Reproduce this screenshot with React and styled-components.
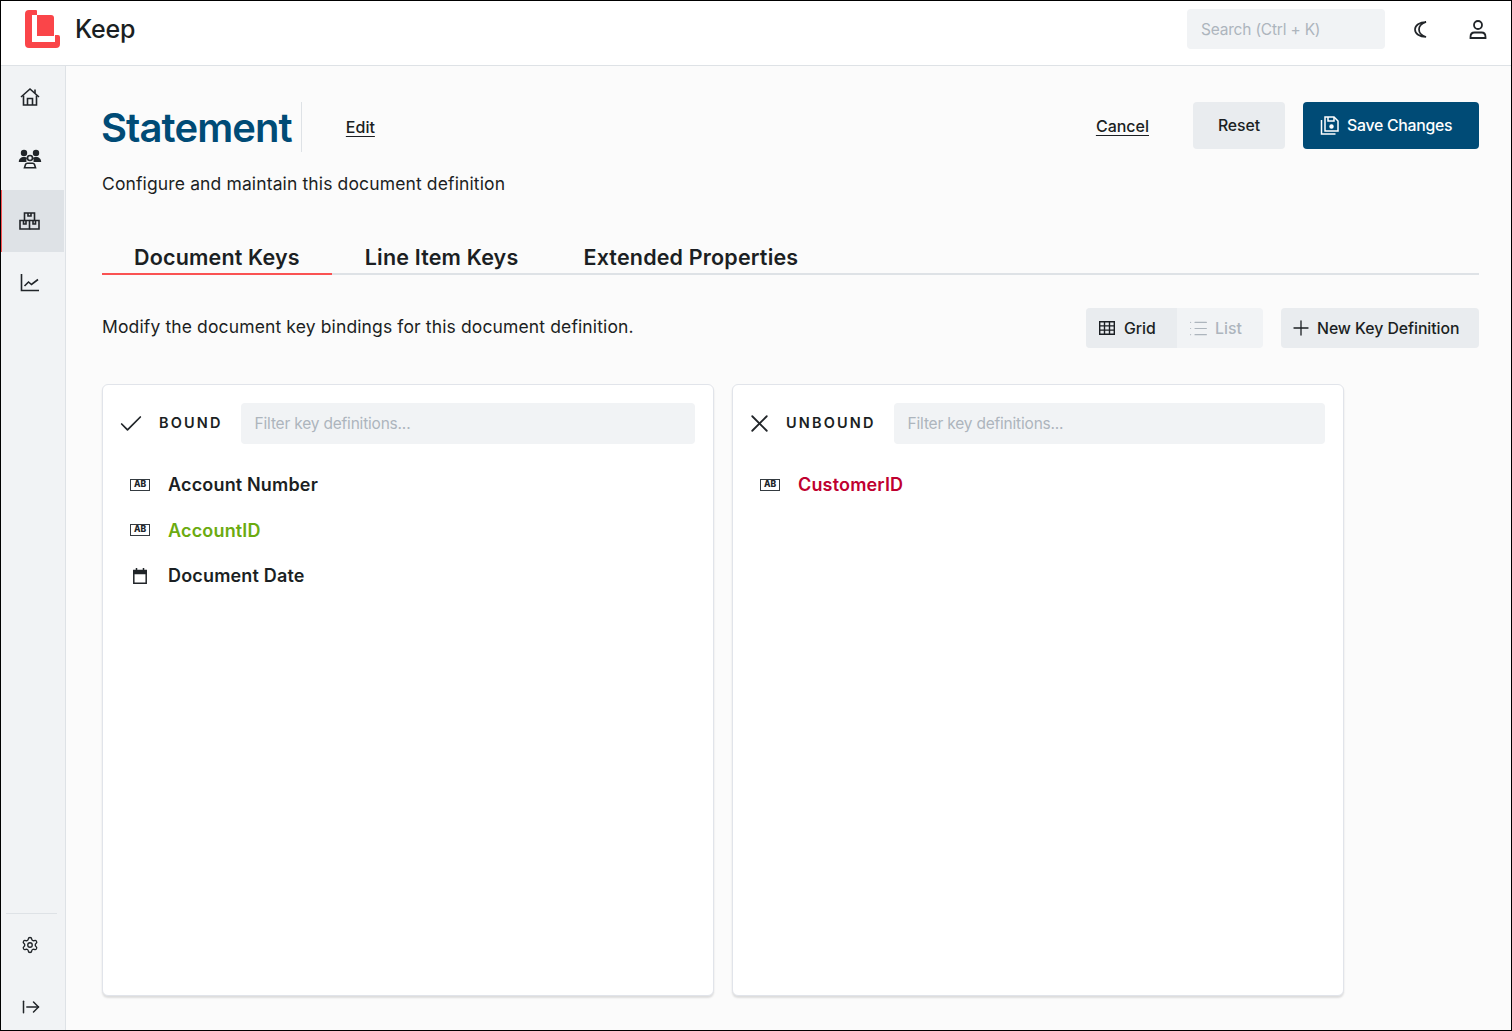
import React from "react";
import styled, { createGlobalStyle } from "styled-components";
import { Check, X, Plus, List, Settings, ArrowRightFromLine } from "lucide-react";

const GlobalStyle = createGlobalStyle`
  html, body { margin: 0; padding: 0; height: 100%; }
  body { font-family: Inter, "Noto Sans", sans-serif; color: #1b1f23; background: #fff; }
  * { box-sizing: border-box; }
  input::placeholder { color: #adb5bd; opacity: 1; }
`;

const Frame = styled.div`
  width: 1512px;
  height: 1031px;
  border: 1px solid #000;
  display: flex;
  flex-direction: column;
  overflow: hidden;
`;

const TopBar = styled.header`
  height: 65px;
  flex: none;
  background: #fff;
  border-bottom: 1px solid #dee2e6;
  display: flex;
  align-items: center;
  padding: 0 24px 8px;
`;

const Brand = styled.div`
  display: flex;
  align-items: center;
  gap: 15px;
  font-size: 25px;
  font-weight: 500;
  letter-spacing: -0.2px;
  margin-right: auto;
`;

const SearchBox = styled.input`
  width: 198px;
  height: 40px;
  border: 0;
  border-radius: 4px;
  background: #f1f3f5;
  padding: 0 14px;
  font: 400 15.5px Inter, sans-serif;
  letter-spacing: -0.2px;
`;

const TopIcon = styled.span`
  display: flex;
  margin-left: ${(p) => p.$gap}px;
  color: #212529;
`;

const Body = styled.div`
  flex: 1;
  display: flex;
  min-height: 0;
`;

const SideBar = styled.nav`
  width: 65px;
  flex: none;
  background: #f1f3f5;
  border-right: 1px solid #dee2e6;
  display: flex;
  flex-direction: column;
`;

const SideItem = styled.a`
  height: 62px;
  width: 63px;
  flex: none;
  display: flex;
  align-items: center;
  justify-content: center;
  padding-right: 7px;
  color: #212529;
  background: ${(p) => (p.$active ? "#dee2e6" : "transparent")};
  border-left: 1px solid ${(p) => (p.$active ? "#fa5252" : "transparent")};
  &:last-child {
    margin-bottom: -8px;
    padding-right: 5px;
  }
`;

const SideSpacer = styled.div`
  flex: 1;
`;

const SideRule = styled.hr`
  width: 51px;
  height: 1px;
  flex: none;
  border: 0;
  margin: 0 0 0 5px;
  background: #dee2e6;
`;

const Main = styled.main`
  flex: 1;
  min-width: 0;
  background: #fbfbfb;
  padding: 36px 32px 0 36px;
`;

const PageHead = styled.div`
  display: flex;
  align-items: center;
  height: 50px;
`;

const Title = styled.h1`
  margin: 0 0 0 -1px;
  font-size: 40px;
  line-height: 52px;
  height: 50px;
  font-weight: 600;
  letter-spacing: -0.9px;
  color: #004b76;
  padding-right: 9px;
  border-right: 1px solid #dee2e6;
`;

const TextLink = styled.a`
  font-size: 16px;
  font-weight: 500;
  color: #1b1f23;
  text-decoration: underline;
  text-underline-offset: 3px;
  margin-left: ${(p) => p.$left || 0};
`;

const HeadActions = styled.div`
  margin-left: auto;
  display: flex;
  align-items: center;
  height: 47px;
  margin-top: -3px;
`;

const Button = styled.button`
  height: ${(p) => p.$h || 47}px;
  width: ${(p) => p.$w}px;
  margin-left: ${(p) => p.$left || 0}px;
  padding: 0 0 0 ${(p) => p.$pad || 0}px;
  border: 0;
  border-radius: 4px;
  background: ${(p) => (p.$primary ? "#004b76" : "#e9ecef")};
  color: ${(p) => (p.$primary ? "#fff" : "#1b1f23")};
  font: 500 15.8px Inter, sans-serif;
  letter-spacing: ${(p) => (p.$primary ? "-0.25px" : "-0.05px")};
  display: flex;
  align-items: center;
  justify-content: ${(p) => (p.$pad ? "flex-start" : "center")};
  gap: ${(p) => p.$gap || 8}px;
  flex: none;
`;

const Subtitle = styled.p`
  margin: 21px 0 0;
  font-size: 17.5px;
  line-height: 21px;
  letter-spacing: 0.13px;
`;

const Tabs = styled.div`
  display: flex;
  margin-top: 47px;
  height: 34px;
  border-bottom: 2px solid #dee2e6;
`;

const Tab = styled.div`
  font-size: 21.5px;
  line-height: 32px;
  font-weight: 600;
  letter-spacing: 0.17px;
  padding: 0 32px;
  height: 34px;
  border-bottom: 2px solid ${(p) => (p.$active ? "#fa5252" : "transparent")};
  & + & {
    margin-left: 1px;
  }
`;

const ToolRow = styled.div`
  display: flex;
  align-items: center;
  margin-top: 33px;
  height: 40px;
`;

const ToolText = styled.p`
  margin: 0 auto 4px 0;
  font-size: 17.5px;
  letter-spacing: 0.13px;
`;

const Segmented = styled.div`
  display: flex;
  height: 40px;
  border-radius: 4px;
  overflow: hidden;
  background: #f1f3f5;
  margin-right: 18px;
`;

const Segment = styled.div`
  width: ${(p) => p.$w}px;
  padding-left: ${(p) => p.$pad}px;
  display: flex;
  align-items: center;
  gap: ${(p) => p.$gap}px;
  font-size: 15.8px;
  font-weight: 500;
  background: ${(p) => (p.$on ? "#e9ecef" : "transparent")};
  color: ${(p) => (p.$on ? "#1b1f23" : "#adb5bd")};
`;

const Cards = styled.div`
  display: flex;
  gap: 18px;
  margin-top: 36px;
`;

const Card = styled.section`
  width: 612px;
  height: 612px;
  background: #fff;
  border: 1px solid #e1e4ea;
  border-radius: 6px;
  box-shadow: 0 2px 2px rgba(0, 0, 0, 0.12);
  padding: 18px;
`;

const CardHead = styled.div`
  display: flex;
  align-items: center;
  height: 41px;
`;

const HeadIcon = styled.span`
  display: flex;
  margin-left: ${(p) => p.$left}px;
  color: #212529;
`;

const CardLabel = styled.span`
  font-size: 14.5px;
  font-weight: 600;
  letter-spacing: 2.15px;
  margin-left: ${(p) => p.$left}px;
  margin-right: 18px;
  margin-top: -2px;
`;

const Filter = styled.input`
  flex: 1;
  min-width: 0;
  height: 41px;
  border: 0;
  border-radius: 4px;
  background: #f1f3f5;
  padding: 0 14px;
  font: 400 15.5px Inter, sans-serif;
  letter-spacing: -0.2px;
`;

const KeyList = styled.ul`
  list-style: none;
  margin: 18px 0 0;
  padding: 0 0 0 9px;
`;

const KeyRow = styled.li`
  display: flex;
  align-items: center;
  gap: 18px;
  height: 45.5px;
  font-size: 18px;
  font-weight: 600;
  letter-spacing: 0.17px;
  color: ${(p) => p.$color || "#1b1f23"};
`;

const KeyIcon = styled.span`
  width: 20px;
  display: flex;
  justify-content: center;
  color: #212529;
`;

const TextBadge = styled.span`
  width: 20px;
  height: 12px;
  border: 1.5px solid #343a40;
  font-size: 8.5px;
  line-height: 9px;
  font-weight: 800;
  text-align: center;
  letter-spacing: 0;
  color: #212529;
`;

const Logo = () => (
  <svg width="35" height="38" viewBox="0 0 35 38" fill="#fa4549">
    <path d="M4 0H11a1 1 0 0 1 1 1V5H7V32H30V25H33a2 2 0 0 1 2 2V34a4 4 0 0 1-4 4H4a4 4 0 0 1-4-4V4a4 4 0 0 1 4-4z" />
    <path d="M12 5H26a3 3 0 0 1 3 3V26H12z" />
  </svg>
);

const MoonIcon = () => (
  <svg width="14" height="17" viewBox="0 0 14 17" fill="none" stroke="currentColor" strokeWidth="1.700">
    <path d="M12 1C5.500 1 1 4.500 1 8.500S5.500 16 12 16C7.500 14.500 5 12 5 8.500S7.500 2.500 12 1z" />
  </svg>
);

const PersonIcon = () => (
  <svg width="18" height="19" viewBox="0 0 18 19" fill="none" stroke="currentColor" strokeWidth="1.800">
    <circle cx="9" cy="5" r="4" />
    <path d="M1.500 18v-1C1.500 14.500 3 12.500 5.500 12.500h7C15 12.500 16.500 14.500 16.500 17v1z" />
  </svg>
);

const HomeIcon = () => (
  <svg width="20" height="20" viewBox="0 0 20 20" fill="none" stroke="currentColor" strokeWidth="1.600">
    <path d="M1 10 10 2l9 8" />
    <path d="M15 2.500v3.500" />
    <path d="M3.500 8.500V18h13V8.500" />
    <path d="M7.500 18v-6.500h5V18" />
  </svg>
);

const TeamIcon = () => (
  <svg width="24" height="20" viewBox="0 0 24 20" fill="currentColor">
    <circle cx="6" cy="4" r="3.200" />
    <circle cx="18" cy="4" r="3.200" />
    <path d="M.8 13c0-3 2-5 5.200-5 1.500 0 2.500.3 3.200 1-.8 1-1 2.500-.7 4z" />
    <path d="M23.200 13c0-3-2-5-5.200-5-1.500 0-2.500.3-3.200 1 .8 1 1 2.500.7 4z" />
    <circle cx="12" cy="9" r="2.500" fill="none" stroke="currentColor" strokeWidth="1.600" />
    <path d="M6.500 18.800h11l-1-3.300c-.3-.8-1-1.200-1.800-1.200H9.300c-.8 0-1.500.4-1.800 1.200z" fill="none" stroke="currentColor" strokeWidth="1.600" />
  </svg>
);

const BoxesIcon = () => (
  <svg width="21" height="20" viewBox="0 0 21 20" fill="none" stroke="currentColor" strokeWidth="1.600">
    <path d="M5.500 9V2h10v7" />
    <path d="M9 2v3h3V2" />
    <path d="M1 9.500h9.500V18H1z" />
    <path d="M10.500 9.500H20V18h-9.500" />
    <path d="M4.500 9.500V13h2.500V9.500M14 9.500V13h2.500V9.500" />
  </svg>
);

const ChartIcon = () => (
  <svg width="20" height="18" viewBox="0 0 20 18" fill="none" stroke="currentColor" strokeWidth="1.600">
    <path d="M1.500 0v16.500H19" />
    <path d="M4.500 12l4-4 3 2.500L18 5.500" />
  </svg>
);

const SaveIcon = () => (
  <svg width="19" height="19" viewBox="0 0 19 19" fill="none" stroke="#fff" strokeWidth="1.500">
    <path d="M5 1h9l4 4v10H5z" />
    <path d="M8 1v4h6V1" />
    <circle cx="11.500" cy="10.500" r="1.500" fill="#fff" />
    <path d="M1.500 4v14h14" />
  </svg>
);

const GridIcon = () => (
  <svg width="16" height="14" viewBox="0 0 16 14" fill="none" stroke="currentColor" strokeWidth="1.400">
    <path d="M.7.700h14.600v12.600H.7zM.7 4.900h14.600M.7 9.100h14.600M5.500.700v12.600M10.500.700v12.600" />
  </svg>
);

const CalendarIcon = () => (
  <svg width="14" height="16" viewBox="0 0 14 16" fill="none" stroke="currentColor" strokeWidth="1.500">
    <path d="M.8 2.500h12.400v12.700H.8z" />
    <path d="M.8 3h12.400v2.500H.8z" fill="currentColor" />
    <path d="M3.500 0v3M10.500 0v3" />
  </svg>
);

const Column = ({ icon, iconLeft, label, labelLeft, items }) => (
  <Card>
    <CardHead>
      <HeadIcon $left={iconLeft}>{icon}</HeadIcon>
      <CardLabel $left={labelLeft}>{label}</CardLabel>
      <Filter placeholder="Filter key definitions..." readOnly />
    </CardHead>
    <KeyList>
      {items.map((item) => (
        <KeyRow key={item.name} $color={item.color}>
          <KeyIcon>{item.date ? <CalendarIcon /> : <TextBadge>AB</TextBadge>}</KeyIcon>
          {item.name}
        </KeyRow>
      ))}
    </KeyList>
  </Card>
);

export default function App() {
  return (
    <Frame>
      <GlobalStyle />
      <TopBar>
        <Brand>
          <Logo />
          Keep
        </Brand>
        <SearchBox placeholder="Search (Ctrl + K)" readOnly />
        <TopIcon $gap={29}>
          <MoonIcon />
        </TopIcon>
        <TopIcon $gap={41}>
          <PersonIcon />
        </TopIcon>
      </TopBar>
      <Body>
        <SideBar>
          <SideItem><HomeIcon /></SideItem>
          <SideItem><TeamIcon /></SideItem>
          <SideItem $active><BoxesIcon /></SideItem>
          <SideItem><ChartIcon /></SideItem>
          <SideSpacer />
          <SideRule />
          <SideItem><Settings size={18} strokeWidth={1.8} /></SideItem>
          <SideItem><ArrowRightFromLine size={20} strokeWidth={1.8} /></SideItem>
        </SideBar>
        <Main>
          <PageHead>
            <Title>Statement</Title>
            <TextLink $left="44px">Edit</TextLink>
            <HeadActions>
              <TextLink>Cancel</TextLink>
              <Button $w={92} $left={44}>Reset</Button>
              <Button $primary $w={176} $left={18} $pad={17}>
                <SaveIcon />
                Save Changes
              </Button>
            </HeadActions>
          </PageHead>
          <Subtitle>Configure and maintain this document definition</Subtitle>
          <Tabs>
            <Tab $active>Document Keys</Tab>
            <Tab>Line Item Keys</Tab>
            <Tab>Extended Properties</Tab>
          </Tabs>
          <ToolRow>
            <ToolText>Modify the document key bindings for this document definition.</ToolText>
            <Segmented>
              <Segment $on $w={91} $pad={13} $gap={9}>
                <GridIcon />
                Grid
              </Segment>
              <Segment $w={86} $pad={11} $gap={6}>
                <List size={21} strokeWidth={1.3} />
                List
              </Segment>
            </Segmented>
            <Button $h={40} $w={198} $pad={8} $gap={4}>
              <Plus size={24} strokeWidth={1.3} />
              New Key Definition
            </Button>
          </ToolRow>
          <Cards>
            <Column
              icon={<Check size={28} strokeWidth={1.5} />}
              iconLeft={-4}
              label="BOUND"
              labelLeft={14}
              items={[
                { name: "Account Number" },
                { name: "AccountID", color: "#6bab10" },
                { name: "Document Date", date: true },
              ]}
            />
            <Column
              icon={<X size={29} strokeWidth={1.5} />}
              iconLeft={-6}
              label="UNBOUND"
              labelLeft={12}
              items={[{ name: "CustomerID", color: "#bf0030" }]}
            />
          </Cards>
        </Main>
      </Body>
    </Frame>
  );
}
